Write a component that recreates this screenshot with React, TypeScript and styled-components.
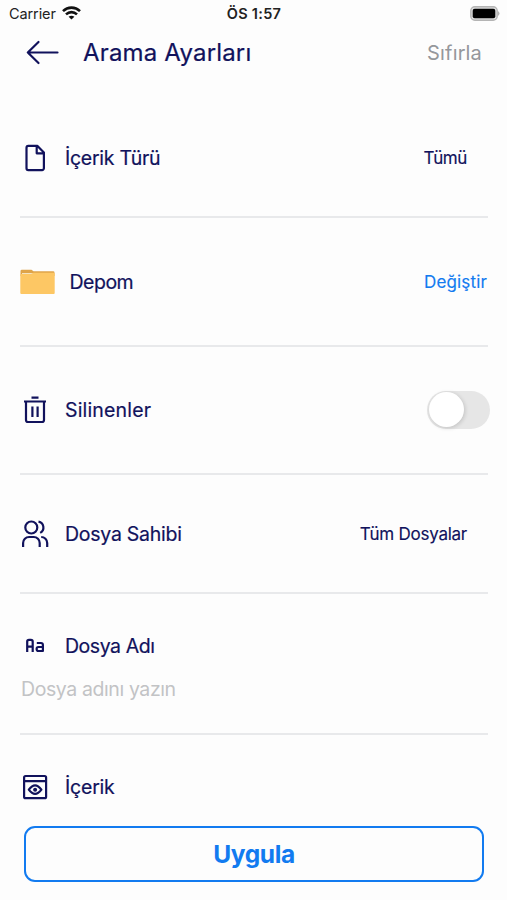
import React from "react";
import styled, { createGlobalStyle } from "styled-components";

const navy = "#11125c";
const blue = "#127bf0";

const Global = createGlobalStyle`
  * { box-sizing: border-box; }
  body { margin: 0; background: #fdfdfd; font-family: Inter, "Liberation Sans", sans-serif; }
  button, input { font-family: inherit; }
`;

const Screen = styled.main`
  width: 507px;
  height: 900px;
  overflow: hidden;
  display: flex;
  flex-direction: column;
  background: #fdfdfd;
  color: ${navy};
`;

const StatusBar = styled.div`
  height: 28px;
  display: grid;
  grid-template-columns: 1fr auto 1fr;
  align-items: center;
  padding: 0 7px 2px 8px;
  color: #222;
`;

const Carrier = styled.div`
  display: flex;
  align-items: center;
  gap: 6px;
  padding-left: 1px;
  font-size: 14.5px;
  letter-spacing: -0.1px;
`;

const Clock = styled.div`
  font-size: 14.5px;
  font-weight: 600;
  letter-spacing: 0.3px;
`;

const Battery = styled.svg`
  justify-self: end;
`;

const Header = styled.header`
  height: 72px;
  display: flex;
  align-items: flex-start;
  padding: 9px 25px 0 26px;
`;

const BackButton = styled.button`
  width: 57px;
  height: 32px;
  padding: 0;
  border: 0;
  background: none;
  display: flex;
  align-items: center;
`;

const Title = styled.h1`
  margin: 0;
  flex: 1;
  font-size: 24px;
  line-height: 32px;
  font-weight: 400;
  -webkit-text-stroke: 0.2px ${navy};
  letter-spacing: 0.17px;
  white-space: nowrap;
`;

const Reset = styled.span`
  font-size: 20px;
  line-height: 32px;
  letter-spacing: 0.15px;
  color: #95979b;
`;

const Section = styled.section<{ $height: number }>`
  height: ${(p) => p.$height}px;
  margin: 0 19px 0 20px;
  border-bottom: 2px solid #e8e9eb;
  display: flex;
  align-items: center;
`;

const IconSlot = styled.span<{ $width?: number }>`
  width: ${(p) => p.$width ?? 45}px;
  display: flex;
  align-items: center;
`;

const Label = styled.span<{ $spacing?: number }>`
  flex: 1;
  font-size: 19.5px;
  line-height: 26px;
  -webkit-text-stroke: 0.2px ${navy};
  letter-spacing: ${(p) => p.$spacing ?? 0}px;
  white-space: nowrap;
`;

const Value = styled.span<{ $link?: boolean; $spacing?: number }>`
  margin-right: ${(p) => (p.$link ? 1 : 21)}px;
  font-size: 17px;
  line-height: 24px;
  color: ${(p) => (p.$link ? blue : navy)};
  -webkit-text-stroke: 0.15px currentColor;
  letter-spacing: ${(p) => p.$spacing ?? 0}px;
`;

const Toggle = styled.button`
  width: 63px;
  height: 38px;
  margin-right: -2px;
  padding: 1px 1px 1px 2px;
  border: 0;
  border-radius: 19px;
  background: #e6e6e6;
  display: flex;
`;

const Knob = styled.span`
  width: 35px;
  height: 35px;
  border-radius: 50%;
  background: #fff;
  box-shadow: 1px 1px 4px rgba(0, 0, 0, 0.16);
`;

const NameSection = styled.section`
  height: 141px;
  margin: 0 19px 0 20px;
  border-bottom: 2px solid #e8e9eb;
  padding-top: 39px;
`;

const LabelRow = styled.div`
  display: flex;
  align-items: center;
  height: 26px;
`;

const NameInput = styled.input`
  display: block;
  width: 100%;
  height: 30px;
  margin-top: 15px;
  padding: 0 0 0 1px;
  border: 0;
  outline: 0;
  background: transparent;
  font-size: 19.5px;
  letter-spacing: -0.4px;
  &::placeholder { color: #c2c3c5; opacity: 1; }
`;

const ContentSection = styled.section`
  height: 91px;
  margin: 0 19px 0 20px;
  padding-top: 39px;
`;

const Apply = styled.button`
  height: 56px;
  margin: 0 23px 0 24px;
  flex: none;
  border: 2px solid ${blue};
  border-radius: 11px;
  background: #fdfdfd;
  color: ${blue};
  font-size: 24.5px;
  line-height: 30px;
  font-weight: 700;
  letter-spacing: -0.4px;
  padding: 0;
`;

const Line = styled.svg`
  display: block;
  fill: none;
  stroke: ${navy};
  stroke-width: 2.2;
  stroke-linejoin: round;
`;

const Wifi = () => (
  <svg width="19" height="14" viewBox="0 0 19 14" fill="none" stroke="#111" strokeWidth="2.6">
    <path d="M1 5.1C5.8.4 13.2.4 18 5.1M4 8.4c3.2-3 7.8-3 11 0" />
    <path d="M9.5 13.6 6.6 10.7c1.7-1.4 4.1-1.4 5.8 0Z" fill="#111" stroke="none" />
  </svg>
);

export default function App() {
  return (
    <>
      <Global />
      <Screen>
        <StatusBar>
          <Carrier>Carrier <Wifi /></Carrier>
          <Clock>ÖS 1:57</Clock>
          <Battery width="30" height="15" viewBox="0 0 30 15">
            <rect x=".8" y=".8" width="26.4" height="13.4" rx="4" fill="#ddd" stroke="#b4b4b4" strokeWidth="1.4" />
            <rect x="2.7" y="2.8" width="22.6" height="9.4" rx="2" fill="#000" />
            <path d="M28 5q3 2.5 0 5Z" fill="#b4b4b4" />
          </Battery>
        </StatusBar>

        <Header>
          <BackButton aria-label="Geri">
            <Line width="34" height="26" viewBox="0 0 34 26" strokeLinecap="round">
              <path d="M31.500 12.500H1.800M12.500 2 1.800 12.500l10.700 10.500" />
            </Line>
          </BackButton>
          <Title>Arama Ayarları</Title>
          <Reset>Sıfırla</Reset>
        </Header>

        <Section $height={118}>
          <IconSlot>
            <Line width="30" height="30" viewBox="0 0 30 30">
              <path d="M8.300 2.900h9.200L23.900 9.500V25.300a1.800 1.800 0 0 1-1.800 1.800H8.300a1.800 1.800 0 0 1-1.800-1.800V4.700A1.800 1.800 0 0 1 8.300 2.900ZM16.700 3v7.300H24" />
            </Line>
          </IconSlot>
          <Label $spacing={-0.27}>İçerik Türü</Label>
          <Value $spacing={-0.4}>Tümü</Value>
        </Section>

        <Section $height={129}>
          <IconSlot $width={49.5}>
            <svg width="35" height="26" viewBox="0 0 35 26">
              <path d="M.5 3.500V2Q.5.700 1.800.700h9.700l2 1.600h19.700q1.300 0 1.300 1.300V7H.5Z" fill="#dfa449" />
              <path d="M2 4h31v5H2Z" fill="#f4e3c1" />
              <path d="M.3 6Q.3 5 1.300 5H11l2.500-1.300h20.200q1 0 1 1V24q0 1-1 1H1.300q-1 0-1-1Z" fill="#fdc764" />
            </svg>
          </IconSlot>
          <Label $spacing={-0.5}>Depom</Label>
          <Value $link $spacing={0.15}>Değiştir</Value>
        </Section>

        <Section $height={128}>
          <IconSlot>
            <Line width="30" height="30" viewBox="0 0 30 30">
              <path d="M4 6.500h22M11.500 2.700h7M6 6.500V25a2 2 0 0 0 2 2h14a2 2 0 0 0 2-2V6.500M12.400 11.500v10.500M17.600 11.500v10.500" />
            </Line>
          </IconSlot>
          <Label $spacing={0.17}>Silinenler</Label>
          <Toggle role="switch" aria-checked={false} aria-label="Silinenler"><Knob /></Toggle>
        </Section>

        <Section $height={119}>
          <IconSlot>
            <Line width="30" height="30" viewBox="0 0 30 30">
              <circle cx="11.300" cy="8.500" r="6" />
              <path d="M3.100 28v-4a6 6 0 0 1 6-6h4.600a6 6 0 0 1 6 6V28M18.500 2.700a6 6 0 0 1 1.700 11.200M21.200 18a6 6 0 0 1 6 6V28" />
            </Line>
          </IconSlot>
          <Label $spacing={-0.25}>Dosya Sahibi</Label>
          <Value $spacing={-0.25}>Tüm Dosyalar</Value>
        </Section>

        <NameSection>
          <LabelRow>
            <IconSlot>
              <Line width="30" height="26" viewBox="0 0 30 26">
                <path d="M7.200 19V8.500Q7.200 6.800 9 6.800h1.900Q12.700 6.800 12.700 8.500V19M7.200 13.700h5.500M16.800 10h4.200q1.900 0 1.900 1.900V18h-4.400q-1.900 0-1.900-2t1.900-2H22.900" />
              </Line>
            </IconSlot>
            <Label $spacing={-0.45}>Dosya Adı</Label>
          </LabelRow>
          <NameInput placeholder="Dosya adını yazın" />
        </NameSection>

        <ContentSection>
          <LabelRow>
            <IconSlot>
              <Line width="30" height="30" viewBox="0 0 30 30">
                <rect x="4.100" y="4" width="22" height="22.200" rx="1.500" />
                <path d="M4 9.200h22M8.800 17.700q6.300-8.500 12.600 0-6.300 8.500-12.600 0Z" />
                <circle cx="15.100" cy="17.700" r="2" fill={navy} stroke="none" />
              </Line>
            </IconSlot>
            <Label $spacing={-0.2}>İçerik</Label>
          </LabelRow>
        </ContentSection>

        <Apply>Uygula</Apply>
      </Screen>
    </>
  );
}
